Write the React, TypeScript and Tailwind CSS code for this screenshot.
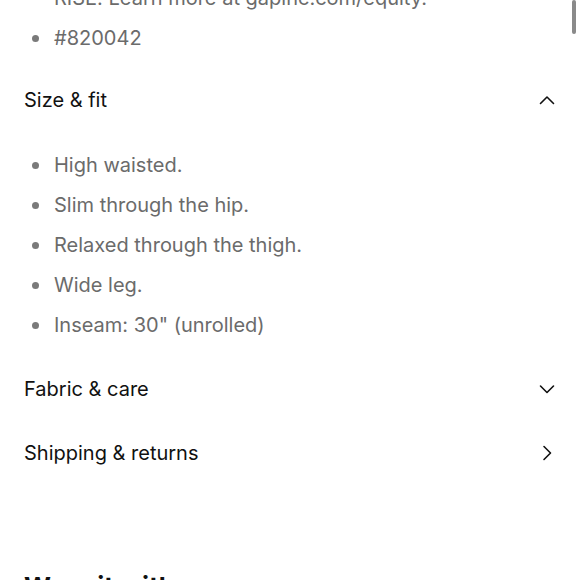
import React from 'react';

const fitItems = [
  'High waisted.',
  'Slim through the hip.',
  'Relaxed through the thigh.',
  'Wide leg.',
  'Inseam: 30" (unrolled)',
];

const Chevron = ({ dir }: { dir: 'up' | 'down' | 'right' }) => {
  const points =
    dir === 'up' ? '1.5,11.5 8,5 14.5,11.5' : dir === 'down' ? '1.5,5 8,11.5 14.5,5' : '5,1.5 11.5,8 5,14.5';
  return (
    <svg width="16" height="16" viewBox="0 0 16 16" fill="none">
      <polyline points={points} stroke="#111" strokeWidth="1.6" strokeLinecap="round" strokeLinejoin="round" />
    </svg>
  );
};

const Bullet = ({ children }: { children: React.ReactNode }) => (
  <li className="flex items-center h-10">
    <span className="ml-2 mr-[15px] w-[7px] h-[7px] rounded-full bg-[#7a7a7a] shrink-0" />
    <span>{children}</span>
  </li>
);

const SectionHeader = ({ title, dir }: { title: string; dir: 'up' | 'down' | 'right' }) => (
  <div className="flex items-center justify-between h-16">
    <span className="text-[20px] text-[#111]">{title}</span>
    <span className="mr-[1px]">
      <Chevron dir={dir} />
    </span>
  </div>
);

export default function App() {
  return (
    <div
      className="relative h-[580px] w-[580px] overflow-hidden bg-white"
      style={{ fontFamily: 'Inter, "Noto Sans", sans-serif' }}
    >
      <div className="absolute right-[4px] top-0 w-[4px] h-[34px] rounded-full bg-[#8a8a8a]" />

      <div className="-mt-[22px] px-6">
        {/* Details, tail end */}
        <ul className="pb-[10px] text-[20px] text-[#6b6b6b]">
          <li className="flex items-center h-10 pl-[30px]">RISE. Learn more at gapinc.com/equity.</li>
          <Bullet>#820042</Bullet>
        </ul>

        {/* Size & fit */}
        <SectionHeader title="Size & fit" dir="up" />
        <ul className="pt-[13px] pb-3 text-[20px] text-[#6b6b6b]">
          {fitItems.map((item) => (
            <Bullet key={item}>{item}</Bullet>
          ))}
        </ul>

        <SectionHeader title="Fabric & care" dir="down" />
        <SectionHeader title="Shipping & returns" dir="right" />

        <h2 className="mt-[86px] text-[26px] leading-8 font-bold text-[#111]">Wear it with</h2>
      </div>
    </div>
  );
}
